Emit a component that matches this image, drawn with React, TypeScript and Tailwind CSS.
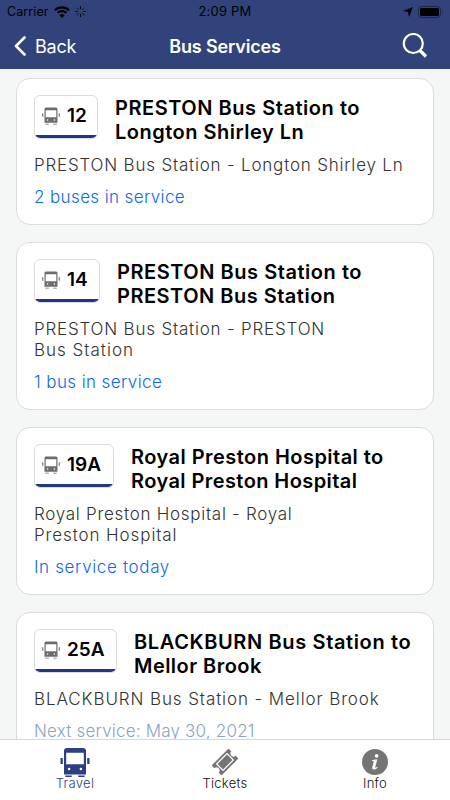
import React from 'react';

interface Service {
  route: string;
  badge: string;
  title: string[];
  titleClass: string[];
  desc: string[];
  descClass: string[];
  status: string;
  statusClass: string;
}

const services: Service[] = [
  {
    route: '12',
    badge: 'w-[64px]',
    title: ['PRESTON Bus Station to', 'Longton Shirley Ln'],
    titleClass: ['tracking-[0.54px]', 'tracking-[0.5px]'],
    desc: ['PRESTON Bus Station - Longton Shirley Ln'],
    descClass: ['tracking-[0.8px]'],
    status: '2 buses in service',
    statusClass: 'text-[#0b68f0] tracking-[0.38px]',
  },
  {
    route: '14',
    badge: 'w-[66px]',
    title: ['PRESTON Bus Station to', 'PRESTON Bus Station'],
    titleClass: ['tracking-[0.54px]', 'tracking-[0.5px]'],
    desc: ['PRESTON Bus Station - PRESTON', 'Bus Station'],
    descClass: ['tracking-[0.8px]', 'tracking-[1px]'],
    status: '1 bus in service',
    statusClass: 'text-[#0b68f0] tracking-[0.4px]',
  },
  {
    route: '19A',
    badge: 'w-[80px]',
    title: ['Royal Preston Hospital to', 'Royal Preston Hospital'],
    titleClass: ['tracking-[0.46px]', 'tracking-[0.42px]'],
    desc: ['Royal Preston Hospital - Royal', 'Preston Hospital'],
    descClass: ['tracking-[0.72px]', 'tracking-[0.9px]'],
    status: 'In service today',
    statusClass: 'text-[#0b68f0] tracking-[0.65px]',
  },
  {
    route: '25A',
    badge: 'w-[83px]',
    title: ['BLACKBURN Bus Station to', 'Mellor Brook'],
    titleClass: ['tracking-[0.63px]', 'tracking-[0.45px]'],
    desc: ['BLACKBURN Bus Station - Mellor Brook'],
    descClass: ['tracking-[0.9px]'],
    status: 'Next service: May 30, 2021',
    statusClass: 'text-[#8aa4c4] tracking-[0.2px]',
  },
];

const BusIcon = ({ className }: { className: string }) => (
  <svg viewBox="0 0 30 30" className={className} fill="currentColor">
    <path
      fillRule="evenodd"
      d="M7 1h16q3 0 3 3v23.500H4V4q0-3 3-3zM6.200 5.700v11.600h17.600V5.700zM7.800 22a1.300 1.300 0 1 0 2.600 0a1.300 1.300 0 1 0-2.600 0zM19.600 22a1.300 1.300 0 1 0 2.600 0a1.300 1.300 0 1 0-2.600 0z"
    />
    <path d="M.5 11h2.300v6H.5zM27.200 11h2.300v6h-2.300zM5.200 28.400h6.500V30H6.200q-1 0-1-1zM18.300 28.400h6.500v.6q0 1-1 1h-5.500z" />
  </svg>
);

const SmallBusIcon = () => (
  <svg viewBox="0 0 18 18" className="h-[18px] w-[18px] shrink-0" fill="#6c6c6c">
    <path
      fillRule="evenodd"
      d="M4 .5h10q1.500 0 1.500 1.500v13.800h-13V2Q2.500.500 4 .5zM3.700 3.200v7h10.600v-7zM4.800 13a.8.8 0 1 0 1.600 0a.8.8 0 1 0-1.600 0zM11.600 13a.8.8 0 1 0 1.600 0a.8.8 0 1 0-1.600 0z"
    />
    <path d="M.2 6.300h1.100v3.500H.2zM16.700 6.300h1.100v3.500h-1.100zM3.200 16.700h3.600v.9H3.200zM11.200 16.700h3.600v.9h-3.600z" />
  </svg>
);

const TicketIcon = () => (
  <svg viewBox="0 0 28 28" className="h-[28px] w-[28px]">
    <g transform="rotate(-45 14 14)">
      <path
        fill="#757575"
        d="M3 7h22q1 0 1 1v3a3 3 0 0 0 0 6v3q0 1-1 1H3q-1 0-1-1v-3a3 3 0 0 0 0-6V8q0-1 1-1z"
      />
      <path fill="none" stroke="#fff" strokeWidth="1.200" d="M6.700 9.500h14.600v9H6.700z" />
    </g>
  </svg>
);

const InfoIcon = () => (
  <svg viewBox="0 0 26 26" className="h-[26px] w-[26px]">
    <circle cx="13" cy="13" r="13" fill="#757575" />
    <g fill="#fff">
      <circle cx="14.600" cy="6.900" r="1.800" />
      <path d="M10.300 11l5-.7-2 7.500q-.3 1.200.5.900l1.400-1 .5.700q-2 2.200-3.900 2.200-2 0-1.500-2.300l1.300-5q.3-1-.4-1.200l-1.100-.2z" />
    </g>
  </svg>
);

const Header = () => (
  <header className="h-[69px] shrink-0 bg-[#32437c]">
    <div className="relative flex h-[23px] items-center justify-between pl-[7px] pr-[6px] text-[13px] text-black">
      <div className="flex items-center">
        <span className="w-[43px] pt-px text-[12.500px] tracking-[0.1px]">Carrier</span>
        <svg viewBox="0 0 16 12" className="ml-[4px] h-[12px] w-[16px]" fill="none" stroke="#000">
          <path strokeWidth="2.200" d="M1 4.200a10 10 0 0 1 14 0M3.600 7a6.300 6.300 0 0 1 8.800 0" />
          <path fill="#000" stroke="none" d="M8 12L5.400 9.300a3.700 3.700 0 0 1 5.200 0z" />
        </svg>
        <svg viewBox="0 0 12 12" className="ml-[5px] h-[11px] w-[11px]" stroke="#000" strokeWidth="1.100">
          <path d="M6 0v3.500M6 8.500V12" />
          <path opacity=".7" d="M0 6h3.500M8.500 6H12" />
          <path opacity=".5" d="M1.800 1.800l2.400 2.400M7.800 7.800l2.400 2.400M10.200 1.800L7.800 4.200M4.200 7.800l-2.400 2.400" />
        </svg>
      </div>
      <span className="absolute inset-x-0 text-center tracking-[0.2px]">2:09 PM</span>
      <div className="flex items-center gap-[5px]">
        <svg viewBox="0 0 10 10" className="h-[10px] w-[10px]">
          <path d="M10 0L6 10L5 5L0 4z" />
        </svg>
        <svg viewBox="0 0 26 12" className="h-[12px] w-[26px]">
          <rect x=".5" y=".5" width="22" height="11" rx="3" fill="none" stroke="#000" strokeOpacity=".4" />
          <rect x="2" y="2" width="19" height="8" rx="1.500" />
          <path opacity=".5" d="M24 4q1.500 2 0 4z" />
        </svg>
      </div>
    </div>
    <div className="relative flex h-[46px] items-center justify-between pl-[14px] pr-[22px] text-white">
      <div className="flex items-center">
        <svg viewBox="0 0 12 20" className="h-[20px] w-[12px]" fill="none" stroke="#fff" strokeWidth="2.600" strokeLinecap="round" strokeLinejoin="round">
          <path d="M10.500 1.500L2 10l8.500 8.500" />
        </svg>
        <span className="ml-[9px] text-[18px] tracking-[-0.2px]">Back</span>
      </div>
      <h1 className="absolute inset-x-0 text-center text-[18px] font-semibold tracking-[-0.15px]">Bus Services</h1>
      <svg viewBox="0 0 26 26" className="relative h-[26px] w-[26px]" fill="none" stroke="#fff">
        <circle cx="11.300" cy="10.500" r="9.500" strokeWidth="2.200" />
        <path strokeWidth="3.200" d="M17.500 17l6.500 6.500" />
      </svg>
    </div>
  </header>
);

const ServiceCard = ({ service }: { service: Service }) => (
  <article className="shrink-0 rounded-[14px] border border-[#d9dbdc] bg-white px-[17px] pb-[16px] pt-[16px]">
    <div className="flex gap-[17px]">
      <div
        className={`${service.badge} flex h-[44px] shrink-0 flex-col overflow-hidden rounded-[6px] border border-[#d9dbdc]`}
      >
        <div className="flex flex-1 items-center pl-[7px]">
          <SmallBusIcon />
          <span className="ml-[7px] text-[19px] font-semibold leading-none">{service.route}</span>
        </div>
        <div className="h-[3px] bg-[#213880]" />
      </div>
      <h2 className="whitespace-nowrap pt-[2px] text-[20px] font-semibold leading-[23.500px] text-black">
        {service.title.map((line, i) => (
          <span key={i} className={`block ${service.titleClass[i]}`}>{line}</span>
        ))}
      </h2>
    </div>
    <p className="mt-[11px] whitespace-nowrap text-[17px] font-light leading-[21px] text-[#333]">
      {service.desc.map((line, i) => (
        <span key={i} className={`block ${service.descClass[i]}`}>{line}</span>
      ))}
    </p>
    <p className={`mt-[11px] whitespace-nowrap text-[17px] font-light leading-[21px] ${service.statusClass}`}>{service.status}</p>
  </article>
);

const TabBar = () => (
  <nav className="grid h-[61px] shrink-0 grid-cols-3 border-t border-[#d5d8d9] bg-white pt-[7px] text-center text-[13px] font-light leading-[12px] tracking-[0.3px] text-[#111]">
    <div className="flex flex-col items-center text-[#2b3f82]">
      <BusIcon className="h-[30px] w-[30px]" />
      <span>Travel</span>
    </div>
    <div className="flex flex-col items-center">
      <div className="flex h-[30px] items-center"><TicketIcon /></div>
      <span>Tickets</span>
    </div>
    <div className="flex flex-col items-center">
      <div className="flex h-[30px] items-center"><InfoIcon /></div>
      <span>Info</span>
    </div>
  </nav>
);

export default function App() {
  return (
    <div className="flex h-screen flex-col overflow-hidden bg-[#f5f7f7] font-['Inter',sans-serif]">
      <Header />
      <main className="flex min-h-0 flex-1 flex-col gap-[17px] overflow-hidden px-[16px] pt-[9px]">
        {services.map((s) => (
          <ServiceCard key={s.route} service={s} />
        ))}
      </main>
      <TabBar />
    </div>
  );
}
